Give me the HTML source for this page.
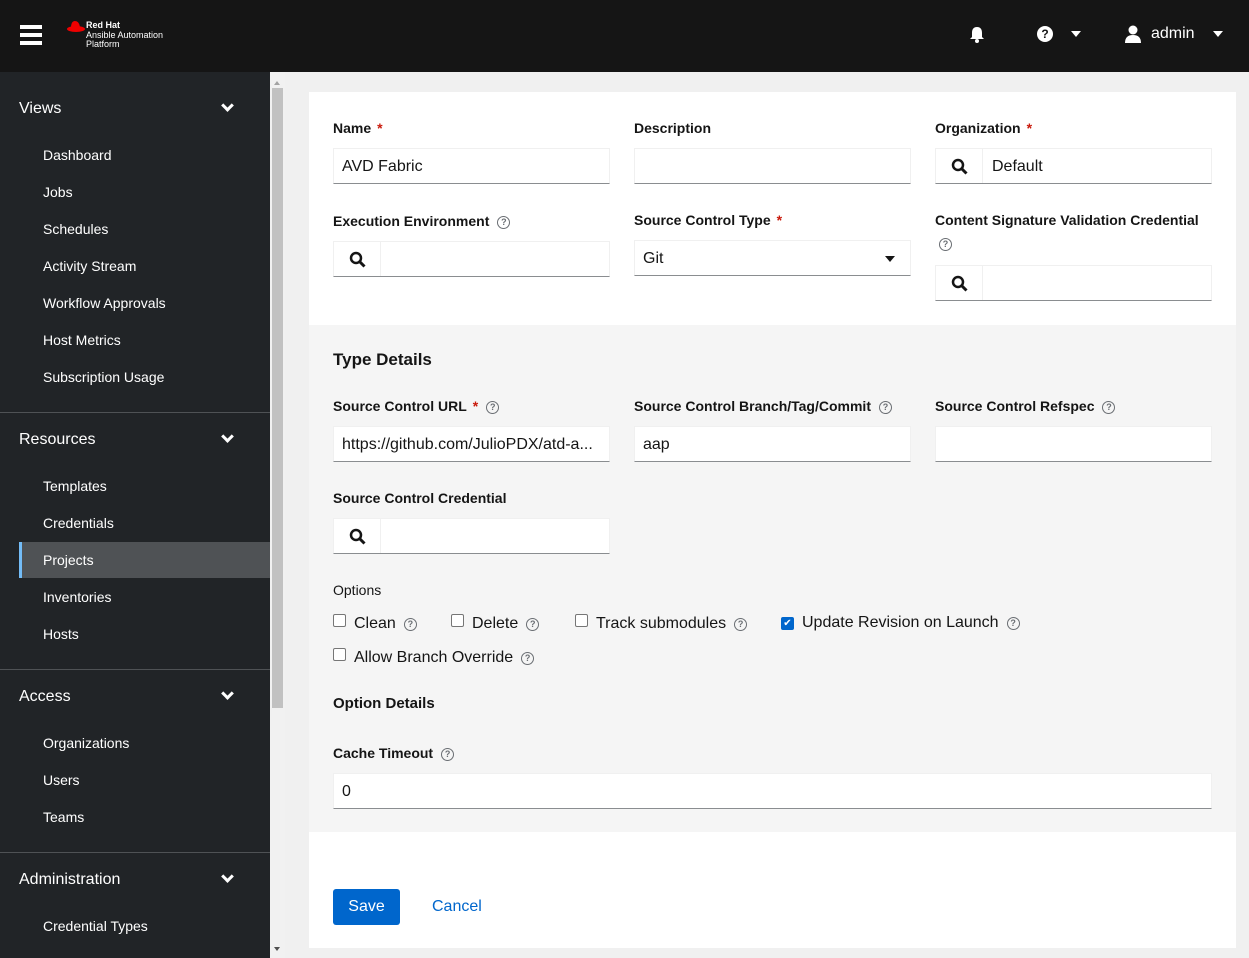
<!DOCTYPE html>
<html><head><meta charset="utf-8"><style>
*{box-sizing:border-box;margin:0;padding:0}
body{width:1249px;height:958px;overflow:hidden;font-family:"Liberation Sans",sans-serif;background:#f0f0f0;position:relative;color:#151515}
.hdr{position:absolute;left:0;top:0;width:1249px;height:72px;background:#151515}
.side{position:absolute;left:0;top:72px;width:270px;height:886px;background:#212427;color:#fff}
.abs{position:absolute}
.sec{position:absolute;left:19px;font-size:16px;color:#fff}
.it{position:absolute;left:43px;font-size:14px;color:#fff}
.chev{position:absolute;left:223px;width:9px;height:9px;border-right:3px solid #fff;border-bottom:3px solid #fff;transform:rotate(45deg)}
.sep{position:absolute;left:0;width:270px;height:1px;background:#4f5255}
.card{position:absolute;left:309px;top:92px;width:927px;height:856px;background:#fff}
.gray{position:absolute;left:309px;top:325px;width:927px;height:507px;background:#f5f5f5}
.lbl{position:absolute;font-size:14px;font-weight:bold;color:#151515}
.req{color:#c9190b;margin-left:6px}
.inp{position:absolute;width:277px;height:36px;background:#fff;border:1px solid #f0f0f0;border-bottom-color:#8a8d90;font-size:16px;padding:9px 8px;color:#151515;white-space:nowrap;overflow:hidden}
.srch{position:absolute;left:0;top:0;width:47px;height:35px;border-right:1px solid #f0f0f0}
.q{display:inline-block;width:13px;height:13px;border:1.5px solid #6a6e73;border-radius:50%;font-size:9px;line-height:10px;text-align:center;color:#6a6e73;font-weight:bold;vertical-align:1px;margin-left:8px}
.opt{position:absolute;font-size:16px;color:#151515}
.cb{display:inline-block;width:13px;height:13px;border:1px solid #767676;border-radius:2px;background:#fff;vertical-align:1px;margin-right:8px}
</style></head><body>
<div class="hdr">
 <div class="abs" style="left:20px;top:25px;width:22px;height:4px;background:#fff;box-shadow:0 8px 0 #fff,0 16px 0 #fff"></div>
 <svg class="abs" style="left:66px;top:19px" width="20" height="14" viewBox="0 0 20 14"><ellipse cx="10" cy="10" rx="9" ry="3" fill="#e00"/><path d="M5 9 Q5 2 9 2 Q13 2 14 8 Z" fill="#e00"/></svg>
 <div class="abs" style="left:86px;top:21px;font-size:9px;line-height:9.5px;color:#fff"><b>Red Hat</b><br>Ansible Automation<br>Platform</div>
 <svg class="abs" style="left:969px;top:26px" width="16" height="17" viewBox="0 0 16 17"><path d="M8 1 C4 1 3 4 3 7 L3 11 L1 13 L15 13 L13 11 L13 7 C13 4 12 1 8 1Z" fill="#fff"/><circle cx="8" cy="15" r="2" fill="#fff"/></svg>
 <div class="abs" style="left:1037px;top:26px;width:16px;height:16px;border-radius:50%;background:#fff;color:#151515;font-size:12px;font-weight:bold;text-align:center;line-height:16px">?</div>
 <div class="abs" style="left:1071px;top:31px;border:5px solid transparent;border-top:6px solid #fff"></div>
 <svg class="abs" style="left:1125px;top:25px" width="16" height="18" viewBox="0 0 16 18"><circle cx="8" cy="5" r="4.5" fill="#fff"/><path d="M0 18 Q0 10 8 10 Q16 10 16 18Z" fill="#fff"/></svg>
 <div class="abs" style="left:1151px;top:25px;font-size:16px;color:#fff">admin</div>
 <div class="abs" style="left:1213px;top:31px;border:5px solid transparent;border-top:6px solid #fff"></div>
</div>
<div class="side">
 <div class="sec" style="top:28px">Views</div><div class="chev" style="top:29px"></div>
 <div class="it" style="top:75px">Dashboard</div>
 <div class="it" style="top:112px">Jobs</div>
 <div class="it" style="top:149px">Schedules</div>
 <div class="it" style="top:186px">Activity Stream</div>
 <div class="it" style="top:223px">Workflow Approvals</div>
 <div class="it" style="top:260px">Host Metrics</div>
 <div class="it" style="top:297px">Subscription Usage</div>
 <div class="sep" style="top:340px"></div>
 <div class="sec" style="top:359px">Resources</div><div class="chev" style="top:360px"></div>
 <div class="it" style="top:406px">Templates</div>
 <div class="it" style="top:443px">Credentials</div>
 <div class="abs" style="left:19px;top:470px;width:251px;height:36px;background:#4f5255;border-left:3px solid #73bcf7"></div>
 <div class="it" style="top:480px">Projects</div>
 <div class="it" style="top:517px">Inventories</div>
 <div class="it" style="top:554px">Hosts</div>
 <div class="sep" style="top:597px"></div>
 <div class="sec" style="top:616px">Access</div><div class="chev" style="top:617px"></div>
 <div class="it" style="top:663px">Organizations</div>
 <div class="it" style="top:700px">Users</div>
 <div class="it" style="top:737px">Teams</div>
 <div class="sep" style="top:780px"></div>
 <div class="sec" style="top:799px">Administration</div><div class="chev" style="top:800px"></div>
 <div class="it" style="top:846px">Credential Types</div>
</div>
<div class="abs" style="left:270px;top:72px;width:15px;height:886px;background:#f1f1f1"></div>
<div class="abs" style="left:272px;top:88px;width:11px;height:620px;background:#c1c1c1"></div>
<div class="abs" style="left:274px;top:78px;border:3.5px solid transparent;border-bottom:4px solid #a3a3a3"></div>
<div class="abs" style="left:274px;top:947px;border:3.5px solid transparent;border-top:4px solid #505050"></div>
<div class="card"></div>
<div class="gray"></div>

<div class="lbl" style="left:333px;top:120px">Name<span class="req">*</span></div>
<div class="inp" style="left:333px;top:148px">AVD Fabric</div>
<div class="lbl" style="left:634px;top:120px">Description</div>
<div class="inp" style="left:634px;top:148px"></div>
<div class="lbl" style="left:935px;top:120px">Organization<span class="req">*</span></div>
<div class="inp" style="left:935px;top:148px;padding-left:56px"><div class="srch"><svg style="position:absolute;left:15px;top:9px" width="17" height="17" viewBox="0 0 17 17"><circle cx="7" cy="7" r="5" stroke="#151515" stroke-width="2.5" fill="none"/><path d="M10.5 10.5L15.5 15.5" stroke="#151515" stroke-width="3"/></svg></div>Default</div>

<div class="lbl" style="left:333px;top:213px">Execution Environment<span class="q">?</span></div>
<div class="inp" style="left:333px;top:241px"><div class="srch"><svg style="position:absolute;left:15px;top:9px" width="17" height="17" viewBox="0 0 17 17"><circle cx="7" cy="7" r="5" stroke="#151515" stroke-width="2.5" fill="none"/><path d="M10.5 10.5L15.5 15.5" stroke="#151515" stroke-width="3"/></svg></div></div>
<div class="lbl" style="left:634px;top:212px">Source Control Type<span class="req">*</span></div>
<div class="inp" style="left:634px;top:240px">Git<div class="abs" style="left:250px;top:15px;border:5px solid transparent;border-top:6px solid #151515"></div></div>
<div class="lbl" style="left:935px;top:212px">Content Signature Validation Credential</div>
<div class="abs" style="left:931px;top:235px"><span class="q">?</span></div>
<div class="inp" style="left:935px;top:265px"><div class="srch"><svg style="position:absolute;left:15px;top:9px" width="17" height="17" viewBox="0 0 17 17"><circle cx="7" cy="7" r="5" stroke="#151515" stroke-width="2.5" fill="none"/><path d="M10.5 10.5L15.5 15.5" stroke="#151515" stroke-width="3"/></svg></div></div>

<div class="abs" style="left:333px;top:350px;font-size:17px;font-weight:bold">Type Details</div>
<div class="lbl" style="left:333px;top:398px">Source Control URL<span class="req">*</span><span class="q">?</span></div>
<div class="inp" style="left:333px;top:426px">https://github.com/JulioPDX/atd-a...</div>
<div class="lbl" style="left:634px;top:398px">Source Control Branch/Tag/Commit<span class="q">?</span></div>
<div class="inp" style="left:634px;top:426px">aap</div>
<div class="lbl" style="left:935px;top:398px">Source Control Refspec<span class="q">?</span></div>
<div class="inp" style="left:935px;top:426px"></div>
<div class="lbl" style="left:333px;top:490px">Source Control Credential</div>
<div class="inp" style="left:333px;top:518px"><div class="srch"><svg style="position:absolute;left:15px;top:9px" width="17" height="17" viewBox="0 0 17 17"><circle cx="7" cy="7" r="5" stroke="#151515" stroke-width="2.5" fill="none"/><path d="M10.5 10.5L15.5 15.5" stroke="#151515" stroke-width="3"/></svg></div></div>

<div class="lbl" style="left:333px;top:582px;font-weight:normal;font-weight:500">Options</div>
<div class="opt" style="left:333px;top:614px"><span class="cb"></span>Clean<span class="q">?</span></div>
<div class="opt" style="left:451px;top:614px"><span class="cb"></span>Delete<span class="q">?</span></div>
<div class="opt" style="left:575px;top:614px"><span class="cb"></span>Track submodules<span class="q">?</span></div>
<div class="opt" style="left:781px;top:614px"><span class="cb" style="background:#0066cc;border-color:#0066cc;color:#fff;font-size:10px;line-height:11px;text-align:center">✔</span>Update Revision on Launch<span class="q">?</span></div>
<div class="opt" style="left:333px;top:648px"><span class="cb"></span>Allow Branch Override<span class="q">?</span></div>

<div class="abs" style="left:333px;top:695px;font-size:15px;font-weight:bold">Option Details</div>
<div class="lbl" style="left:333px;top:745px">Cache Timeout<span class="q">?</span></div>
<div class="inp" style="left:333px;top:773px;width:879px">0</div>

<div class="abs" style="left:333px;top:889px;width:67px;height:36px;background:#0066cc;border-radius:3px;color:#fff;font-size:16px;text-align:center;line-height:36px">Save</div>
<div class="abs" style="left:432px;top:898px;font-size:16px;color:#0066cc">Cancel</div>
</body></html>
